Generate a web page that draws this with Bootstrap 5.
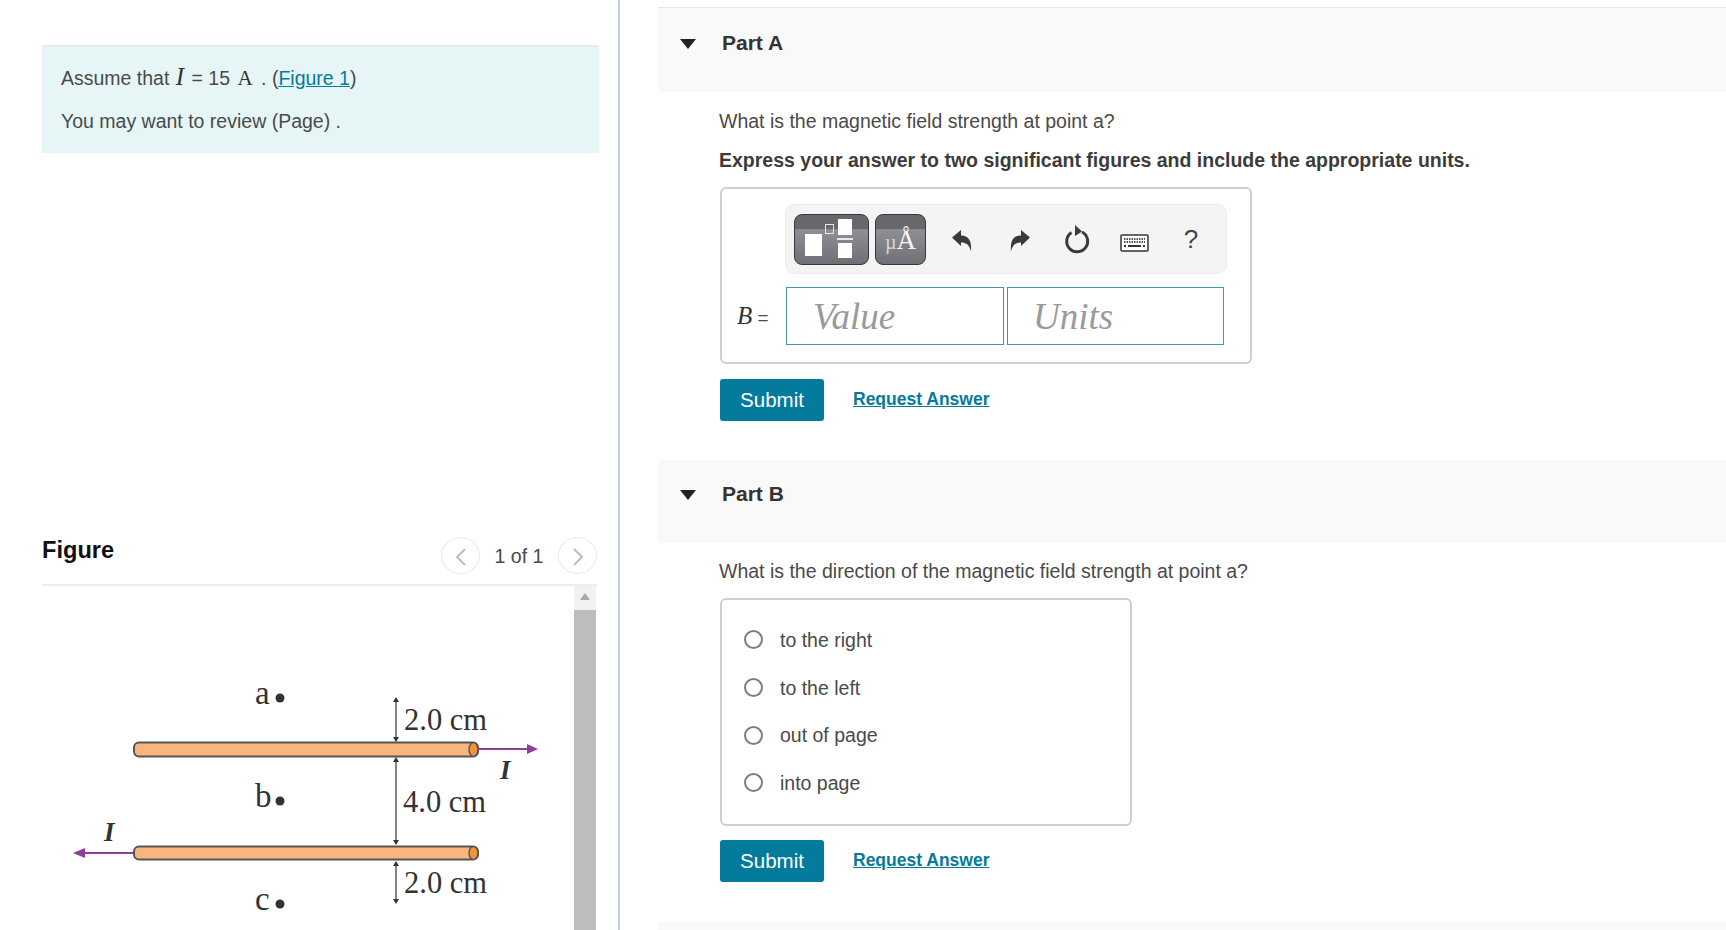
<!DOCTYPE html>
<html lang="en">
<head>
    <meta charset="UTF-8">
    <meta name="viewport" content="width=device-width, initial-scale=1.0">
    <title>Part A and Part B</title>
    <link href="https://cdn.jsdelivr.net/npm/bootstrap@5.3.0/dist/css/bootstrap.min.css" rel="stylesheet">
    <style>
        html, body { height: 930px; overflow: hidden; }
        body { font-family: "Liberation Sans", Arial, sans-serif; font-size: 19.5px; color: #4a4a4a; background: #fff; }
        .serif { font-family: "Liberation Serif", "Times New Roman", serif; color: #333; }

        .left-pane { width: 620px; height: 930px; flex: none; border-right: 2px solid #bccfe4; padding-left: 42px; padding-right: 21px; }
        .info-box { height: 108px; margin: 45px -2px 0 0; padding: 20px 19px 0; background: #e6f6f7; border-top: 2px solid #e6ecee; }
        .info-box p { line-height: 23px; margin-bottom: 20px; }
        .info-box a { color: #047a9c; }
        .info-box .math-i { font-size: 25px; line-height: 20px; margin: 0 2px 0 1px; }
        .info-box .math-a { font-size: 21px; margin: 0 3px 0 2px; }
        .fig-head { height: 433px; padding-top: 384px; border-bottom: 2px solid #eeeeee; }
        .fig-title { font-size: 23.6px; font-weight: 700; color: #111; line-height: 27px; }
        .pager-btn { width: 39px; height: 37px; border: 1px solid #e8e8e8; border-radius: 50%; background: #fff; padding: 0; }
        .pager-text { width: 78px; text-align: center; font-size: 19.5px; padding-top: 2px; }
        .fig-body { height: 344px; }
        .fig-body svg { display: block; }
        .fake-scroll { width: 22px; height: 344px; flex: none; background: #bdbdbd; margin-right: 1px; }
        .fake-scroll-up { height: 24px; background: #f1f1f1; padding-top: 7px; padding-left: 6px; }

        .right-pane { padding-left: 38px; }
        .part-head { height: 85px; padding: 23px 0 0 22px; background: #f9f9f9; }
        .part-a { margin-top: 7px; border-top: 1px solid #e4e4e4; }
        .part-b { height: 83px; margin-top: 39px; padding-top: 22px; }
        .part-c { height: 20px; margin-top: 40px; background: #f9f9f9; }
        .part-title { margin-left: 26px; font-size: 21px; font-weight: 700; color: #333; line-height: 24px; }
        .part-body { padding-left: 61px; }
        .question { line-height: 24px; margin-top: 17px; }
        .part-b + .part-body .question { margin-top: 16px; }
        .instr { font-weight: 700; color: #3c3c3c; line-height: 24px; margin-top: 15px; }

        .answer-box { width: 532px; height: 177px; margin: 15px 0 0 1px; border: 2px solid #cfcfcf; border-radius: 6px; padding: 15px 0 0 63px; }
        .tool-strip { width: 442px; height: 70px; padding: 9px 0 0 8px; background: #f4f4f4; border: 1px solid #ececec; border-radius: 9px; }
        .tpl-btn { height: 51px; padding: 0; border: 1px solid #38383a; border-radius: 8px; background: linear-gradient(#68686c 0, #68686c 28%, #8f8f96 30%, #6f6f74 100%); }
        .tpl-btn svg { display: block; }
        .unit-btn { width: 51px; margin-left: 6px; color: #f4f4f4; font-family: "Liberation Serif", serif; font-size: 27px; line-height: 1; padding-top: 12px; }
        .unit-btn small { font-size: 20px; color: #d8d8d8; }
        .tool-icon { width: 58px; text-align: center; flex: none; }
        .tool-undo { width: 60px; margin-left: 6px; padding-top: 11px; }
        .tool-redo { width: 56px; padding-top: 11px; }
        .tool-reset { width: 58px; padding-top: 9px; }
        .tool-keys { width: 56px; padding-top: 20px; }
        .tool-help { font-size: 26px; color: #444; line-height: 30px; width: 58px; padding-top: 10px; }

        .math-row { margin: 13px 0 0 -48px; }
        .math-label { width: 49px; font-size: 19px; white-space: nowrap; }
        .math-label i { font-size: 25px; }
        .math-input { height: 58px; border: 1px solid #3f97b5; border-radius: 0; padding: 0 0 0 26px; font-family: "Liberation Serif", serif; font-style: italic; font-size: 37px; color: #333; background: #fff; }
        .math-input::placeholder { color: #9a9a9a; }
        .math-value { width: 218px; }
        .math-units { width: 217px; margin-left: 3px; padding-left: 25px; }

        .submit-btn { width: 104px; height: 42px; padding: 0; font-size: 20.5px; font-weight: 500; color: #fff; background: #047a9c; border: 0; border-radius: 3px; }
        .submit-btn:hover { background: #03657f; color: #fff; }
        .req-link { margin: 0 0 2px 29px; font-size: 17.5px; font-weight: 700; color: #047a9c; }
        .submit-row { margin: 15px 0 0 1px; }
        .choice-box + .submit-row { margin-top: 14px; }

        .choice-box { width: 412px; height: 228px; margin: 15px 0 0 1px; border: 2px solid #cfcfcf; border-radius: 6px; padding: 16px 0 0 22px; }
        .choice-row { height: 47.7px; margin: 0; padding: 0; }
        .choice-row .form-check-input { width: 19px; height: 19px; margin: 0 17px 0 0; float: none; border: 2px solid #7d7d7d; flex: none; }
        .choice-row .form-check-label { line-height: 24px; }
    </style>
</head>
<body>
    <div class="d-flex">
        <div class="left-pane">
            <div class="info-box">
                <p>Assume that <i class="serif math-i">I</i> = 15 <span class="serif math-a">A</span> . (<a href="#">Figure 1</a>)</p>
                <p>You may want to review (Page) .</p>
            </div>
            <div class="fig-head d-flex justify-content-between align-items-start">
                <div class="fig-title">Figure</div>
                <div class="d-flex align-items-center">
                    <button class="pager-btn" aria-label="Previous">
                        <svg width="12" height="18" viewBox="0 0 12 18"><path d="M10 1 2 9l8 8" fill="none" stroke="#bdbdbd" stroke-width="2"/></svg>
                    </button>
                    <span class="pager-text">1 of 1</span>
                    <button class="pager-btn" aria-label="Next">
                        <svg width="12" height="18" viewBox="0 0 12 18"><path d="M2 1l8 8-8 8" fill="none" stroke="#bdbdbd" stroke-width="2"/></svg>
                    </button>
                </div>
            </div>
            <div class="fig-body d-flex">
                <svg width="531" height="344" viewBox="42 586 531 344" class="flex-shrink-0">
                    <g fill="#f9b67c" stroke="#555" stroke-width="2">
                        <rect x="134" y="742.500" width="344" height="14" rx="5"/>
                        <rect x="134" y="846.500" width="344" height="13" rx="5"/>
                    </g>
                    <g fill="#ef9340" stroke="#555" stroke-width="1.4">
                        <ellipse cx="473.500" cy="749.500" rx="4.500" ry="7"/>
                        <ellipse cx="473.500" cy="853" rx="4.500" ry="6.500"/>
                    </g>
                    <g stroke="#8e3f9b" stroke-width="1.8" fill="#8e3f9b">
                        <path d="M478 749H530"/>
                        <path d="M527 744l11 5-11 5z" stroke="none"/>
                        <path d="M133 853H82"/>
                        <path d="M85 848l-12 5 12 5z" stroke="none"/>
                    </g>
                    <g stroke="#444" stroke-width="1.3" fill="#333">
                        <path d="M396 700V740M396 760V843M396 864V901"/>
                        <g stroke="none">
                            <path d="M396 697l-3 5h6zM396 742l-3-5h6zM396 757l-3 5h6zM396 845l-3-5h6zM396 861l-3 5h6zM396 904l-3-5h6z"/>
                        </g>
                    </g>
                    <g font-family="Liberation Serif, serif" font-size="30.500" fill="#333">
                        <text x="404" y="730">2.0 cm</text>
                        <text x="403" y="812">4.0 cm</text>
                        <text x="404" y="893">2.0 cm</text>
                        <text x="255" y="704" font-size="33">a</text>
                        <text x="255" y="807" font-size="33">b</text>
                        <text x="255" y="910" font-size="33">c</text>
                    </g>
                    <g font-family="Liberation Serif, serif" font-style="italic" font-weight="700" font-size="27" fill="#333">
                        <text x="500" y="779">I</text>
                        <text x="104" y="841">I</text>
                    </g>
                    <g fill="#333">
                        <circle cx="280" cy="698" r="4.500"/>
                        <circle cx="280" cy="801" r="4.500"/>
                        <circle cx="280" cy="904" r="4.500"/>
                    </g>
                </svg>
                <div class="fake-scroll ms-auto">
                    <div class="fake-scroll-up">
                        <svg width="10" height="7" viewBox="0 0 10 7" class="d-block"><path d="M5 0l5 7H0z" fill="#a8a8a8"/></svg>
                    </div>
                </div>
            </div>
        </div>

        <div class="right-pane flex-grow-1">
            <div class="part-head part-a d-flex align-items-start">
                <svg width="16" height="10" viewBox="0 0 16 10" class="mt-2"><path d="M0 0h16L8 10z" fill="#222"/></svg>
                <div class="part-title">Part A</div>
            </div>
            <div class="part-body">
                <div class="question">What is the magnetic field strength at point a?</div>
                <div class="instr">Express your answer to two significant figures and include the appropriate units.</div>
                <div class="answer-box">
                    <div class="tool-strip d-flex align-items-start">
                        <div class="tpl-btn">
                            <svg width="73" height="49" viewBox="0 0 73 49">
                                <rect x="10" y="19" width="17" height="22" fill="#fff"/>
                                <rect x="30.500" y="9.500" width="8" height="9" fill="none" stroke="#e8e8e8"/>
                                <rect x="43" y="4" width="14" height="16" fill="#fff"/>
                                <rect x="42" y="23" width="16" height="2" fill="#e8e8e8"/>
                                <rect x="43" y="28" width="14" height="15" fill="#fff"/>
                            </svg>
                        </div>
                        <div class="tpl-btn unit-btn text-center"><small>µ</small>Å</div>
                        <div class="tool-icon tool-undo">
                            <svg width="22" height="26" viewBox="0 0 22 26"><path d="M1 9.500 10 2v5.500c7.500 0 11 5 10 16-1.500-6.500-4.500-9-10-9V18z" fill="#3a3a3a"/></svg>
                        </div>
                        <div class="tool-icon tool-redo">
                            <svg width="22" height="26" viewBox="0 0 22 26"><path d="M21 9.500 12 2v5.500c-7.500 0-11 5-10 16 1.500-6.500 4.500-9 10-9V18z" fill="#3a3a3a"/></svg>
                        </div>
                        <div class="tool-icon tool-reset">
                            <svg width="28" height="32" viewBox="0 0 28 32"><path d="M8.500 9.500a10.500 10.500 0 1 0 10.500-.5" fill="none" stroke="#3a3a3a" stroke-width="3"/><path d="M12 2l7 6.500-7 4.500z" fill="#3a3a3a"/></svg>
                        </div>
                        <div class="tool-icon tool-keys">
                            <svg width="29" height="18" viewBox="0 0 29 18" class="d-block mx-auto">
                                <rect x="1" y="1" width="27" height="16" rx="1" fill="#fff" stroke="#333" stroke-width="1.500"/>
                                <path d="M4 5h21M4 8h21" stroke="#555" stroke-width="2" stroke-dasharray="1.500 1"/>
                                <path d="M4 12h2M8 12h13M23 12h2" stroke="#333" stroke-width="2"/>
                            </svg>
                        </div>
                        <div class="tool-icon tool-help">?</div>
                    </div>
                    <div class="math-row d-flex align-items-center">
                        <div class="math-label"><i class="serif">B</i> =</div>
                        <input class="math-input math-value" placeholder="Value" aria-label="Value">
                        <input class="math-input math-units" placeholder="Units" aria-label="Units">
                    </div>
                </div>
                <div class="submit-row d-flex align-items-center">
                    <button class="btn submit-btn">Submit</button>
                    <a href="#" class="req-link">Request Answer</a>
                </div>
            </div>

            <div class="part-head part-b d-flex align-items-start">
                <svg width="16" height="10" viewBox="0 0 16 10" class="mt-2"><path d="M0 0h16L8 10z" fill="#222"/></svg>
                <div class="part-title">Part B</div>
            </div>
            <div class="part-body">
                <div class="question">What is the direction of the magnetic field strength at point a?</div>
                <div class="choice-box">
                    <div class="form-check choice-row d-flex align-items-center">
                        <input class="form-check-input" type="radio" name="dir" id="dir1">
                        <label class="form-check-label" for="dir1">to the right</label>
                    </div>
                    <div class="form-check choice-row d-flex align-items-center">
                        <input class="form-check-input" type="radio" name="dir" id="dir2">
                        <label class="form-check-label" for="dir2">to the left</label>
                    </div>
                    <div class="form-check choice-row d-flex align-items-center">
                        <input class="form-check-input" type="radio" name="dir" id="dir3">
                        <label class="form-check-label" for="dir3">out of page</label>
                    </div>
                    <div class="form-check choice-row d-flex align-items-center">
                        <input class="form-check-input" type="radio" name="dir" id="dir4">
                        <label class="form-check-label" for="dir4">into page</label>
                    </div>
                </div>
                <div class="submit-row d-flex align-items-center">
                    <button class="btn submit-btn">Submit</button>
                    <a href="#" class="req-link">Request Answer</a>
                </div>
            </div>
            <div class="part-c"></div>
        </div>
    </div>
</body>
</html>
